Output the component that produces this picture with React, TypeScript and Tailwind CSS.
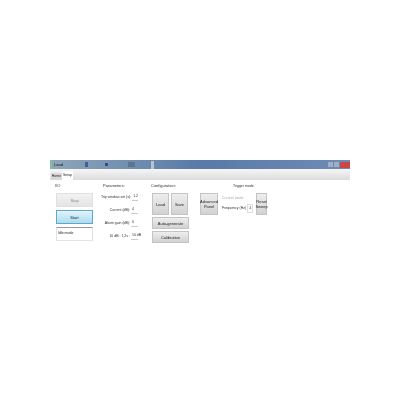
const font = "font-['Liberation_Sans',sans-serif]";

function GrayButton({ className, tone = "from-[#eeeeee] to-[#d2d2d2] border-[#c4c4c4]", children }: { className: string; tone?: string; children: React.ReactNode }) {
  return (
    <div className={`flex items-center justify-center whitespace-nowrap border bg-gradient-to-b text-center text-[4px] leading-[5px] ${tone} ${className}`}>
      {children}
    </div>
  );
}

function ParamRow({ label, value }: { label: string; value: string }) {
  return (
    <div className="flex h-[13px] items-center justify-end gap-[1px] whitespace-nowrap text-[3.5px] text-[#333]">
      <span>{label}</span>
      <span className="w-[7px] border-b border-[#ccc] pl-[1px]">{value}</span>
    </div>
  );
}

export default function App() {
  return (
    <div className={`h-[400px] w-[400px] overflow-hidden bg-white pl-[50px] pt-[160px] ${font}`}>
      <div className="w-[300px] blur-[0.6px]">
        <div className="flex h-[9px] items-center justify-between bg-gradient-to-r from-[#8fa6b8] via-[#587aa8] to-[#6f8bb5]">
          <div className="flex items-center gap-[2px]">
            <div className="h-[9px] w-[2px] bg-[#7fc09a]" />
            <span className="text-[4px] text-[#111]">Load</span>
            <div className="ml-[20px] h-[5px] w-[3px] bg-[#3f5f9a]" />
            <div className="ml-[15px] h-[3px] w-[3px] bg-[#2f4f8a]" />
            <div className="ml-[18px] h-[5px] w-[7px] bg-[#5d7590]" />
            <div className="ml-[14px] h-[8px] w-[3px] bg-[#b9c4cc]" />
          </div>
          <div className="flex h-full items-center gap-[1px]">
            <div className="h-[5px] w-[5px] bg-[#9fb0c4]" />
            <div className="h-[5px] w-[5px] bg-[#9fb0c4]" />
            <div className="h-[6px] w-[10px] bg-[#c8484a]" />
          </div>
        </div>

        <div className="flex h-[11px] items-end bg-gradient-to-b from-[#f6f6f6] to-[#dcdcdc] pl-[1px]">
          <div className="flex h-[7px] w-[11px] items-center justify-center bg-[#d9d9d9] text-[3.5px] text-[#222]">Home</div>
          <div className="flex h-[9px] w-[11px] items-center justify-center bg-white text-[3.5px] text-[#222]">Setup</div>
        </div>

        <div className="flex bg-white pt-[2px]">
          <div className="ml-[5px] w-[38px]">
            <div className="h-[8px] text-[4px] leading-[8px] text-[#333]">I/O</div>
            <div className="mt-[3px] flex flex-col gap-[3px] pl-[1px]">
              <GrayButton className="h-[14px] w-[37px] text-[#888]" tone="from-[#f2f2f2] to-[#e4e4e4] border-[#e0e0e0]">Stop</GrayButton>
              <GrayButton className="h-[14px] w-[37px] text-[#222]" tone="from-[#e2f4fb] to-[#aadcf0] border-[#5fa8cc]">Start</GrayButton>
              <div className="flex h-[14px] w-[37px] items-center whitespace-nowrap border border-[#e2e2e2] border-t-[#999] pl-[1px] text-[3.5px] text-[#222]">Idle mode</div>
            </div>
          </div>

          <div className="ml-[10px] w-[35px]">
            <div className="h-[8px] whitespace-nowrap text-[4px] leading-[8px] text-[#333]">Parameters:</div>
            <div className="mt-[1px]">
              <ParamRow label="Trip window set (s):" value="1.2" />
              <ParamRow label="Current (dB):" value="4" />
              <ParamRow label="Alarm gain (dB):" value="0" />
              <ParamRow label="10 dB : 1.2s :" value="10 dB" />
            </div>
          </div>

          <div className="ml-[13px] w-[39px]">
            <div className="h-[8px] whitespace-nowrap text-[4px] leading-[8px] text-[#333]">Configuration:</div>
            <div className="mt-[3px] flex flex-col gap-[2px] pl-[1px]">
              <div className="flex gap-[2px]">
                <GrayButton className="h-[22px] w-[17px] text-[#222]">Load</GrayButton>
                <GrayButton className="h-[22px] w-[17px] text-[#222]">Save</GrayButton>
              </div>
              <GrayButton className="h-[12px] w-[37px] text-[#222]">Auto-generate</GrayButton>
              <GrayButton className="h-[12px] w-[37px] text-[#222]">Calibration</GrayButton>
            </div>
          </div>

          <div className="ml-[10px] mt-[11px]">
            <GrayButton className="h-[22px] w-[18px] text-[#222]">Advanced<br />Panel</GrayButton>
          </div>

          <div className="ml-[4px] w-[33px] whitespace-nowrap">
            <div className="h-[8px] pl-[11px] text-[3.5px] leading-[8px] text-[#333]">Trigger mode</div>
            <div className="mt-[3px] text-[3.5px] leading-[10px] text-[#aaa]">Current mode</div>
            <div className="flex items-center gap-[1px] text-[3.5px] leading-[10px] text-[#333]">
              <span>Frequency (Hz)</span>
              <span className="border border-[#ddd] px-[1px] leading-[7px]">4</span>
            </div>
          </div>

          <div className="ml-[1px] mt-[11px]">
            <GrayButton className="h-[22px] w-[11px] text-[#222]">Reset<br />Sweep</GrayButton>
          </div>
        </div>
      </div>
    </div>
  );
}
